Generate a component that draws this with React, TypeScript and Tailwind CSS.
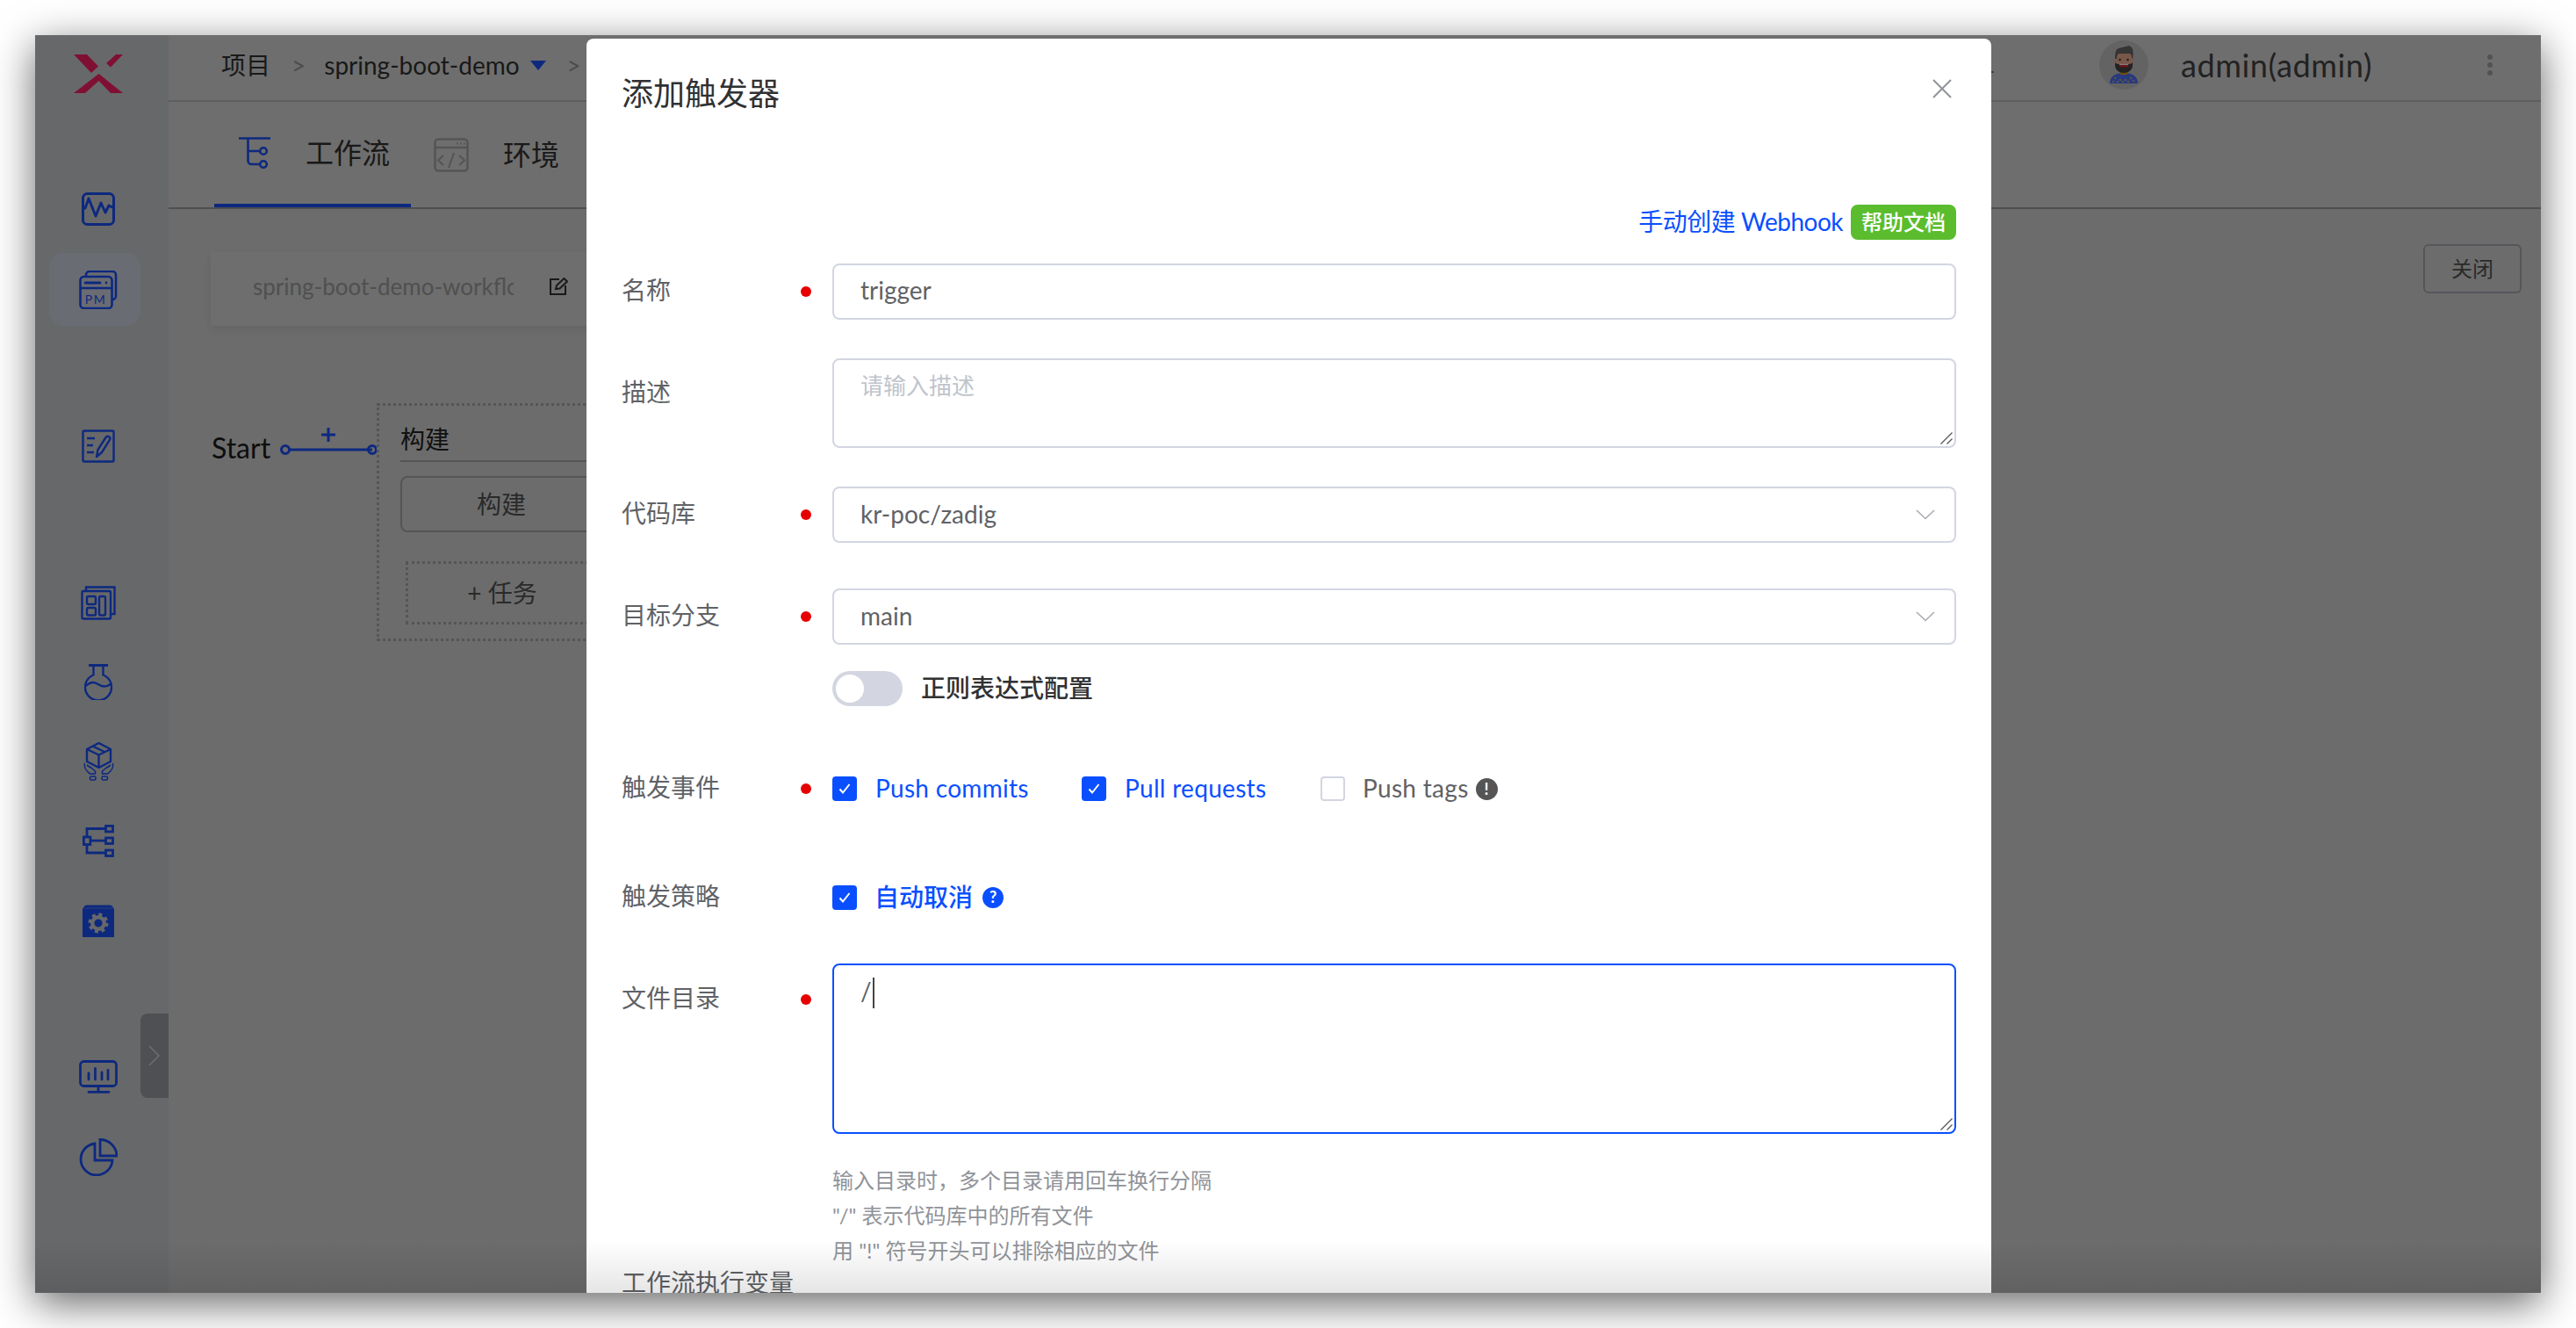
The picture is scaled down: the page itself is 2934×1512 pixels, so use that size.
import React from 'react';

const NAV_BLUE = 'text-[#1a52ff]';

function LogoX() {
  return (
    <svg width="56" height="44" viewBox="0 0 56 44" className="text-[#ff2068]" fill="currentColor">
      <polygon points="0,0 15,0 28,13.5 20,21" />
      <polygon points="48,0 56,0 42,14.5 37,10" />
      <polygon points="0,44 28.5,22 56,44 42,44 28.5,30 13,44" />
    </svg>
  );
}

function IconPulse() {
  return (
    <svg width="38" height="38" viewBox="0 0 38 38" fill="none" stroke="currentColor" strokeWidth="3" strokeLinejoin="round">
      <rect x="1.5" y="1.5" width="35" height="35" rx="5" />
      <polyline points="1,18 4,18 8,7 16,27 22,12 27,23 31,15 37,18" />
    </svg>
  );
}

function IconPm() {
  return (
    <svg width="44" height="44" viewBox="0 0 44 44" fill="none" stroke="currentColor" strokeWidth="2.6">
      <path d="M8 7V5a4 4 0 0 1 4-4h26a4 4 0 0 1 4 4v24a4 4 0 0 1-4 4" />
      <rect x="1.5" y="7" width="36" height="36" rx="4" />
      <path d="M1.5 20h36" />
      <path d="M7 14h17" strokeWidth="3" strokeLinecap="round" />
      <circle cx="31" cy="14" r="1.4" fill="currentColor" stroke="none" />
      <text x="19" y="38" textAnchor="middle" fontSize="14" letterSpacing="1.5" fill="currentColor" stroke="none" fontFamily="Lato, sans-serif">PM</text>
    </svg>
  );
}

function IconDocEdit() {
  return (
    <svg width="38" height="38" viewBox="0 0 38 38" fill="none" stroke="currentColor" strokeWidth="2.4" strokeLinejoin="round">
      <rect x="1.5" y="1.5" width="35" height="35" rx="1.5" />
      <path d="M6 10h9M6 18h7M6 26h8" />
      <path d="M17 31l1.5-8L27.5 9a2.6 2.6 0 0 1 4.5 2.6L23 26z" />
    </svg>
  );
}

function IconBoards() {
  return (
    <svg width="40" height="39" viewBox="0 0 40 39" fill="none" stroke="currentColor" strokeWidth="2.4">
      <path d="M6 6V1.5h32.5V32H34" />
      <rect x="1.5" y="6" width="32.5" height="31.5" rx="1.5" />
      <rect x="7" y="12" width="10" height="9" rx="1.5" />
      <rect x="7" y="25" width="10" height="8.5" rx="1.5" />
      <rect x="21" y="12" width="7" height="21.5" rx="1.5" />
    </svg>
  );
}

function IconFlask() {
  return (
    <svg width="32" height="41" viewBox="0 0 32 41" fill="none" stroke="currentColor" strokeWidth="2.4">
      <path d="M5 1.5h22" strokeWidth="3" />
      <path d="M10.5 1.5v11a15 15 0 1 0 11 0v-11" />
      <path d="M1.5 25c7-6 11-4 15-1.5s9 3 14-1" />
    </svg>
  );
}

function IconHandBox() {
  return (
    <svg width="35" height="44" viewBox="0 0 35 44" fill="none" stroke="currentColor" strokeWidth="2" strokeLinejoin="round">
      <path d="M17.5 1l13.5 7v14l-13.5 7L4 22V8z" strokeWidth="2.4" />
      <path d="M4 8l13.5 6.5L31 8M17.5 14.5V29M10.5 4.5L24 11" strokeWidth="2.4" />
      <path d="M1.5 24c-1 6 2 9 6 12h6v-3l-6-5M4 26l4 3" strokeWidth="1.6" />
      <path d="M33.5 24c1 6-2 9-6 12h-6v-3l6-5M31 26l-4 3" strokeWidth="1.6" />
      <rect x="7.5" y="39" width="6.5" height="4" rx="1.5" strokeWidth="1.6" />
      <rect x="21" y="39" width="6.5" height="4" rx="1.5" strokeWidth="1.6" />
    </svg>
  );
}

function IconTree() {
  return (
    <svg width="36" height="37" viewBox="0 0 36 37" fill="none" stroke="currentColor" strokeWidth="2.8">
      <rect x="1.4" y="14" width="7.5" height="8.5" />
      <rect x="26.5" y="1.4" width="8" height="6.5" />
      <rect x="26.5" y="15" width="8" height="6.5" />
      <rect x="26.5" y="29" width="8" height="6.5" />
      <path d="M5 14V4.5h21.5M5 22.5V32h21.5M9 18.2h17.5" />
    </svg>
  );
}

function IconGearBox() {
  return (
    <svg width="36" height="37" viewBox="0 0 36 37">
      <path d="M5 0.5h26c2 0 3 1 4 3L36 5v32H0V5l1-1.5C2 1.5 3 .5 5 .5z" fill="currentColor" />
      <path d="M2 4h32" stroke="#cfd1d4" strokeWidth="0.8" opacity="0.5" />
      <circle cx="18" cy="21" r="9.8" fill="none" stroke="#cfd1d4" strokeWidth="3.4" strokeDasharray="4 3.7" />
      <circle cx="18" cy="21" r="6.8" fill="none" stroke="#cfd1d4" strokeWidth="4.4" />
    </svg>
  );
}

function IconMonitor() {
  return (
    <svg width="44" height="38" viewBox="0 0 44 38" fill="none" stroke="currentColor" strokeWidth="2.8" strokeLinecap="round">
      <rect x="1.5" y="1.5" width="41" height="28" rx="4" />
      <path d="M11 15v7M18.5 9.5v12.5M26 14v8M33 11.5v10.5" />
      <path d="M22 30v6M11 36.4h23" />
    </svg>
  );
}

function IconPie() {
  return (
    <svg width="44" height="43" viewBox="0 0 44 43" fill="none" stroke="currentColor" strokeWidth="2.8">
      <path d="M18 6a18 18 0 1 0 20 19H18z" />
      <path d="M24 1.5A19 19 0 0 1 43 20H24z" />
    </svg>
  );
}

function IconWorkflow() {
  return (
    <svg width="36" height="36" viewBox="0 0 36 36" fill="none" stroke="currentColor" strokeWidth="2.6">
      <path d="M0 1.5h36M10.5 1.5V27a4 4 0 0 0 4 4H24M10.5 16H24" />
      <circle cx="28" cy="16" r="3.8" />
      <circle cx="28" cy="31" r="3.8" />
    </svg>
  );
}

function IconCode() {
  return (
    <svg width="40" height="39" viewBox="0 0 40 39" fill="none" stroke="#aaaaaa" strokeWidth="2.6">
      <rect x="1.5" y="1.5" width="37" height="36" rx="4" />
      <path d="M1.5 11h37" />
      <path d="M26 6.5h1.6M30 6.5h1.6M34 6.5h1.6" />
      <path d="M11 20l-6 5.5 6 5.5M29 20l6 5.5-6 5.5M23 17l-6 17" strokeWidth="2.2" />
    </svg>
  );
}

function IconEdit() {
  return (
    <svg width="21" height="20" viewBox="0 0 21 20" fill="none" stroke="#333" strokeWidth="2">
      <path d="M11 2H1v17h17V9" />
      <path d="M7 13l1-4 8.5-8L20 4.5 11.5 12.5z" />
    </svg>
  );
}

function Avatar() {
  return (
    <svg width="56" height="56" viewBox="0 0 56 56" className="shrink-0">
      <ellipse cx="28" cy="28" rx="28" ry="28" fill="#c6c6c6" />
      <path d="M12 49c0-8 6-12 16-12s16 4 16 12z" fill="#5474ff" />
      <rect x="24" y="32" width="8" height="7" fill="#e0a020" />
      <ellipse cx="28" cy="23" rx="10.5" ry="13" fill="#f0b090" />
      <path d="M18 25c1 1 2 2 4 2h12c2 0 3-1 4-2v3c0 6-5 9-10 9s-10-3-10-9z" fill="#444" />
      <rect x="22.5" y="26.5" width="11" height="4" rx="2" fill="#d22" />
      <rect x="23" y="26.5" width="10" height="1.6" fill="#fff" />
      <path d="M18 21c0-8 1-11 4-12l12-3 3 2c2 3 2 8 1 13l-1-1c0-3-1-5-3-5H23c-2 0-3 2-3 6z" fill="#6a6a6a" />
      <circle cx="23.5" cy="22" r="1.2" fill="#333" />
      <circle cx="32.5" cy="22" r="1.2" fill="#333" />
      <g fill="#f5d040">
        <circle cx="18" cy="43" r="0.9" />
        <circle cx="24" cy="45" r="0.9" />
        <circle cx="30" cy="45" r="0.9" />
        <circle cx="36" cy="43" r="0.9" />
        <circle cx="21" cy="47" r="0.9" />
        <circle cx="27" cy="47" r="0.9" />
        <circle cx="33" cy="47" r="0.9" />
        <circle cx="39" cy="46" r="0.9" />
        <circle cx="16" cy="47" r="0.9" />
      </g>
    </svg>
  );
}

function Chevron() {
  return (
    <svg width="22" height="12" viewBox="0 0 22 12" fill="none" stroke="#a8abb2" strokeWidth="1.6">
      <path d="M1 1l10 9.5L21 1" />
    </svg>
  );
}

function Check() {
  return (
    <svg width="16" height="14" viewBox="0 0 16 14" fill="none" stroke="#fff" strokeWidth="2">
      <path d="M2.5 7.5l3.5 4L13.5 2" />
    </svg>
  );
}

function ResizeGrip() {
  return (
    <svg width="14" height="14" viewBox="0 0 14 14" fill="none" stroke="#555" strokeWidth="1.3" className="absolute right-[4px] bottom-[4px]">
      <path d="M0.5 13.5L13.5 0.5M7.5 13.5L13.5 7.5" />
    </svg>
  );
}

function CheckBox({ checked = true }: { checked?: boolean }) {
  return checked ? (
    <span className="w-[28px] h-[28px] rounded-[4px] bg-[#0a4fff] flex items-center justify-center shrink-0">
      <Check />
    </span>
  ) : (
    <span className="w-[28px] h-[28px] rounded-[4px] border-2 border-[#d3d6e1] bg-white shrink-0" />
  );
}

function Field({
  label,
  labelClass,
  dotClass,
  children,
}: {
  label: string;
  labelClass: string;
  dotClass?: string;
  children: React.ReactNode;
}) {
  return (
    <div className="flex items-start">
      <div className={`w-[204px] shrink-0 text-[28px] leading-[40px] text-[#606266] ${labelClass}`}>{label}</div>
      <div className="w-[12px] mr-[24px] shrink-0">
        {dotClass && <div className={`w-[12px] h-[12px] rounded-full bg-[#e60000] ${dotClass}`} />}
      </div>
      <div className="flex-1 min-w-0">{children}</div>
    </div>
  );
}

function SelectBox({ value }: { value: string }) {
  return (
    <div className="h-[64px] rounded-[8px] border-2 border-[#d3d6e1] pl-[30px] pr-[22px] flex items-center justify-between text-[28px] text-[#606266]">
      <span className="-mt-[3px]">{value}</span>
      <Chevron />
    </div>
  );
}

export default function App() {
  return (
    <div className="w-[2934px] h-[1512px] overflow-hidden bg-white pt-[40px] pl-[40px] font-[Lato,'Noto_Sans_CJK_SC',sans-serif]">
      <div className="relative flex w-[2854px] h-[1432px] overflow-hidden bg-[#d9d9d9] shadow-[0_12px_44px_rgba(0,0,0,0.6)]">
        {/* Sidebar */}
        <aside className={`relative w-[152px] shrink-0 bg-[#cfd1d4] flex flex-col ${NAV_BLUE}`}>
          <div className="mt-[22px] ml-[44px]">
            <LogoX />
          </div>
          <div className="mt-[113px] ml-[53px]">
            <IconPulse />
          </div>
          <div className="mt-[31px] ml-[16px] pl-[8px] w-[104px] h-[83px] rounded-[16px] bg-[#d4d8e6] flex items-center justify-center">
            <IconPm />
          </div>
          <div className="mt-[118px] ml-[53px]">
            <IconDocEdit />
          </div>
          <div className="mt-[140px] ml-[52px]">
            <IconBoards />
          </div>
          <div className="mt-[50px] ml-[56px]">
            <IconFlask />
          </div>
          <div className="mt-[48px] ml-[55px]">
            <IconHandBox />
          </div>
          <div className="mt-[50px] ml-[54px]">
            <IconTree />
          </div>
          <div className="mt-[54px] ml-[54px]">
            <IconGearBox />
          </div>
          <div className="mt-[140px] ml-[50px]">
            <IconMonitor />
          </div>
          <div className="mt-[51px] ml-[50px]">
            <IconPie />
          </div>
          <div className="absolute right-0 top-[1114px] w-[32px] h-[96px] rounded-l-[8px] bg-[#9ea0a6] flex items-center justify-center">
            <svg width="14" height="24" viewBox="0 0 14 24" fill="none" stroke="#e0e0e0" strokeWidth="1.4">
              <path d="M1 1l11 11L1 23" />
            </svg>
          </div>
        </aside>

        {/* Main */}
        <main className="flex-1 min-w-0 flex flex-col">
          {/* Top bar */}
          <div className="h-[76px] shrink-0 bg-[#dcdcdc] border-b-2 border-[#bebebe] flex items-center pl-[60px] pr-[55px] pb-[6px] text-[28px] text-[#333]">
            <span>项目</span>
            <span className="ml-[24px] text-[#999]">&gt;</span>
            <span className="ml-[21px]">spring-boot-demo</span>
            <svg width="18" height="11" viewBox="0 0 18 11" className={`ml-[12px] ${NAV_BLUE}`} fill="currentColor">
              <polygon points="0,0 18,0 9,11" />
            </svg>
            <span className="ml-[24px] text-[#999]">&gt;</span>
            <div className="ml-auto flex items-center">
              <span className="mt-[16px] mr-[120px] w-[4px] h-[2px] bg-[#808080]" />
              <Avatar />
              <span className="ml-[37px] text-[36px] leading-[40px] tracking-[0.6px] text-[#444]">admin(admin)</span>
              <div className="ml-[131px] flex flex-col gap-[3px]">
                <span className="w-[6px] h-[6px] rounded-full bg-[#a4a4a4]" />
                <span className="w-[6px] h-[6px] rounded-full bg-[#a4a4a4]" />
                <span className="w-[6px] h-[6px] rounded-full bg-[#a4a4a4]" />
              </div>
            </div>
          </div>

          {/* Tabs */}
          <div className="h-[122px] shrink-0 bg-[#dcdcdc] border-b-2 border-[#9a9ea4] flex pl-[52px] text-[32px] text-[#333]">
            <div className="w-[224px] h-[120px] border-b-4 border-[#1a52ff] flex items-center pl-[28px]">
              <span className={NAV_BLUE}>
                <IconWorkflow />
              </span>
              <span className="ml-[40px]">工作流</span>
            </div>
            <div className="flex items-center pl-[26px] h-[120px]">
              <IconCode />
              <span className="ml-[39px]">环境</span>
            </div>
          </div>

          {/* Editor */}
          <div className="flex items-start justify-between pt-[40px] pl-[48px] pr-[22px]">
            <div className="mt-[8px] w-[560px] h-[85px] bg-[#dcdcdc] shadow-[0_4px_12px_rgba(0,0,0,0.08)] flex items-center pl-[48px] pb-[5px] text-[26px] text-[#a0a0a0]">
              <span className="w-[297px] overflow-hidden whitespace-nowrap">spring-boot-demo-workflow</span>
              <span className="ml-[41px]">
                <IconEdit />
              </span>
            </div>
            <div className="w-[112px] h-[56px] rounded-[6px] border-2 border-[#aaacb4] flex items-center justify-center text-[24px] text-[#555]">
              关闭
            </div>
          </div>

          {/* Canvas */}
          <div className="flex items-start mt-[88px] pl-[49px]">
            <span className="w-[76px] mt-[29px] text-[32px] leading-[44px] text-[#1c1c1c]">Start</span>
            <svg width="112" height="60" viewBox="0 0 112 60" className={`mt-[24px] shrink-0 ${NAV_BLUE}`} fill="none" stroke="currentColor" strokeWidth="3">
              <path d="M13 29h94" />
              <circle cx="8" cy="29" r="4.5" />
              <circle cx="107" cy="29" r="4.5" />
              <path d="M49 12h16M57 4v16" />
            </svg>
            <div className="w-[300px] h-[271px] border-[3px] border-dotted border-[#aaaaaa] pl-[24px] shrink-0">
              <div className="h-[64px] border-b-2 border-[#aaaaaa] text-[28px] leading-[76px] text-[#222]">构建</div>
              <div className="mt-[16px] w-[230px] h-[64px] rounded-[8px] border-2 border-[#aaaaaa] flex items-center justify-center text-[28px] text-[#555]">
                构建
              </div>
              <div className="mt-[33px] ml-[6px] w-[220px] h-[72px] border-[3px] border-dotted border-[#aaaaaa] flex items-center justify-center text-[28px] text-[#555]">
                + 任务
              </div>
            </div>
          </div>
        </main>

        {/* Mask */}
        <div className="absolute inset-0 bg-black/50" />

        {/* Dialog */}
        <div className="absolute left-[628px] top-[4px] w-[1600px] h-[1500px] rounded-[8px] bg-white px-[40px] pt-[38px]">
          <div className="flex items-center justify-between">
            <h2 className="text-[36px] leading-[48px] text-[#303133]">添加触发器</h2>
            <svg width="22" height="22" viewBox="0 0 22 22" fill="none" stroke="#909399" strokeWidth="2" className="mr-[5px] -mt-[10px]">
              <path d="M1 1l20 20M21 1L1 21" />
            </svg>
          </div>

          <div className="mt-[103px] flex items-center justify-end h-[40px]">
            <span className="-mt-[3px] text-[28px] tracking-[-0.5px] text-[#0a4fff]">手动创建 Webhook</span>
            <span className="ml-[9px] w-[120px] h-[40px] rounded-[8px] bg-[#5bbd2e] text-white text-[24px] font-medium flex items-center justify-center">
              帮助文档
            </span>
          </div>

          <div className="mt-[27px]">
            <Field label="名称" labelClass="mt-[10px]" dotClass="mt-[26px]">
              <input
                readOnly
                value="trigger"
                className="w-full h-[64px] rounded-[8px] border-2 border-[#d3d6e1] px-[30px] pb-[4px] text-[28px] text-[#606266] outline-none"
              />
            </Field>
          </div>

          <div className="mt-[44px]">
            <Field label="描述" labelClass="mt-[18px]">
              <div className="relative">
                <textarea
                  readOnly
                  placeholder="请输入描述"
                  className="block w-full h-[102px] resize-none rounded-[8px] border-2 border-[#d3d6e1] px-[30px] py-[10px] text-[26px] leading-[38px] text-[#606266] outline-none placeholder:text-[#c0c4cc]"
                />
                <ResizeGrip />
              </div>
            </Field>
          </div>

          <div className="mt-[44px]">
            <Field label="代码库" labelClass="mt-[10px]" dotClass="mt-[26px]">
              <SelectBox value="kr-poc/zadig" />
            </Field>
          </div>

          <div className="mt-[52px]">
            <Field label="目标分支" labelClass="mt-[10px]" dotClass="mt-[26px]">
              <SelectBox value="main" />
            </Field>
          </div>

          <div className="mt-[30px] ml-[240px] flex items-center h-[40px]">
            <span className="w-[80px] h-[40px] rounded-full bg-[#d3d6e1] p-[4px]">
              <span className="block w-[32px] h-[32px] rounded-full bg-white" />
            </span>
            <span className="ml-[21px] -mt-[2px] text-[28px] font-medium text-[#303133]">正则表达式配置</span>
          </div>

          <div className="mt-[80px]">
            <Field label="触发事件" labelClass="-mt-[8px]" dotClass="mt-[8px]">
              <div className="flex items-center h-[28px] text-[28px] tracking-[0.3px]">
                <div className="w-[284px] flex items-center gap-[21px] text-[#0a4fff]">
                  <CheckBox />
                  <span className="-mt-[2px]">Push commits</span>
                </div>
                <div className="w-[272px] flex items-center gap-[21px] text-[#0a4fff]">
                  <CheckBox />
                  <span className="-mt-[2px]">Pull requests</span>
                </div>
                <div className="flex items-center gap-[20px] text-[#606266]">
                  <CheckBox checked={false} />
                  <span className="-mt-[2px]">Push tags</span>
                </div>
                <span className="ml-[8px] w-[25px] h-[25px] rounded-full bg-[#555] text-white text-[18px] font-bold flex items-center justify-center">!</span>
              </div>
            </Field>
          </div>

          <div className="mt-[92px]">
            <Field label="触发策略" labelClass="-mt-[8px]">
              <div className="flex items-center h-[28px] text-[28px] text-[#0a4fff] font-medium">
                <CheckBox />
                <span className="ml-[20px] -mt-[3px]">自动取消</span>
                <span className="ml-[11px] -mt-[1px] w-[24px] h-[24px] rounded-full bg-[#0a4fff] text-white text-[18px] font-bold flex items-center justify-center">?</span>
              </div>
            </Field>
          </div>

          <div className="mt-[57px]">
            <Field label="文件目录" labelClass="mt-[19px]" dotClass="mt-[35px]">
              <div className="relative">
                <textarea
                  readOnly
                  value="/"
                  className="block w-full h-[194px] resize-none rounded-[8px] border-2 border-[#0a4fff] px-[30px] py-[10px] text-[28px] leading-[38px] text-[#606266] outline-none"
                />
                <span className="absolute left-[46px] top-[16px] w-[2px] h-[35px] bg-[#444]" />
                <ResizeGrip />
              </div>
            </Field>
          </div>

          <div className="mt-[33px] ml-[240px] text-[24px] leading-[40px] text-[#909399]">
            <p>输入目录时，多个目录请用回车换行分隔</p>
            <p>"/" 表示代码库中的所有文件</p>
            <p>用 "!" 符号开头可以排除相应的文件</p>
          </div>

          <div className="-mt-[4px] text-[28px] leading-[40px] text-[#606266]">工作流执行变量</div>
        </div>

        {/* Bottom edge fade from the window capture */}
        <div className="absolute inset-x-0 bottom-0 h-[60px] bg-linear-to-b from-transparent to-black/10 pointer-events-none" />
      </div>
    </div>
  );
}
